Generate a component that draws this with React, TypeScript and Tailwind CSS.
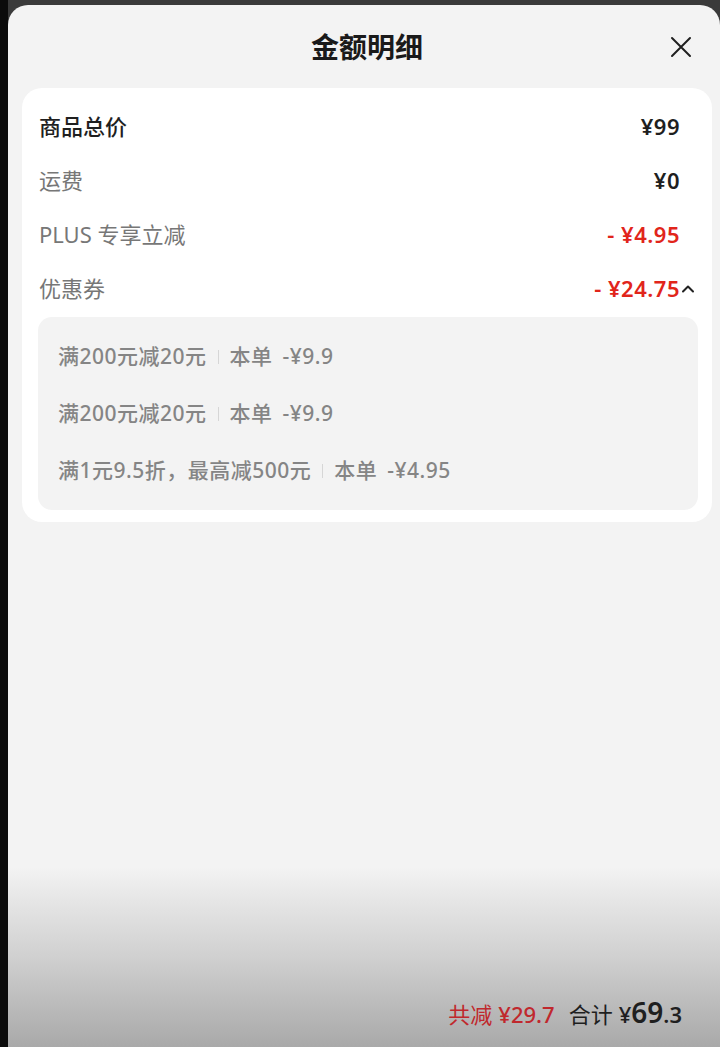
const coupons = [
  { rule: "满200元减20元", off: "-¥9.9" },
  { rule: "满200元减20元", off: "-¥9.9" },
  { rule: "满1元9.5折，最高减500元", off: "-¥4.95" },
];

const Row = ({ label, value, dark, red, open }: { label: string; value: string; dark?: boolean; red?: boolean; open?: boolean }) => (
  <div className="h-[54px] flex items-center justify-between pr-[32px] pb-[3px]">
    <span className={dark ? "text-[22px] text-[#1f1f1f] font-medium" : "text-[22px] text-[#777777]"}>{label}</span>
    <span className={`relative text-[22px] font-semibold tracking-[0.5px] ${red ? "text-[#e1251b]" : "text-[#1f1f1f]"}`}>
      {value}
      {open && (
        <svg className="absolute left-full top-1/2 -translate-y-1/2 ml-[1px]" width="14" height="10" viewBox="0 0 14 10" fill="none">
          <polyline points="2,7.5 7,2.5 12,7.5" stroke="#222" strokeWidth="2" strokeLinecap="round" strokeLinejoin="round" />
        </svg>
      )}
    </span>
  </div>
);

export default function App() {
  return (
    <div
      className="h-[1047px] w-[720px] flex bg-[#0b0b0b] overflow-hidden"
      style={{ fontFamily: '"Noto Sans", "Noto Sans CJK SC", sans-serif' }}
    >
      <div className="w-[8px] shrink-0" />
      <div className="flex-1 flex flex-col bg-[#3a3a3a]">
        <div className="h-[5px] shrink-0" />
        <div className="flex-1 flex flex-col bg-[#f3f3f3] rounded-t-[20px]">
          {/* header */}
          <div className="h-[83px] shrink-0 relative flex items-center justify-center">
            <h1 className="text-[28px] font-bold text-[#1a1a1a] ml-[6px]">金额明细</h1>
            <button className="absolute right-[28px] top-1/2 -translate-y-1/2">
              <svg width="22" height="22" viewBox="0 0 22 22" fill="none">
                <path d="M2 2L20 20M20 2L2 20" stroke="#1f1f1f" strokeWidth="2" strokeLinecap="round" />
              </svg>
            </button>
          </div>

          {/* card */}
          <div className="ml-[14px] mr-[8px] bg-white rounded-[20px] pt-[13px] pb-[12px] pl-[17px]">
            <Row label="商品总价" value="¥99" dark />
            <Row label="运费" value="¥0" />
            <Row label="PLUS 专享立减" value="- ¥4.95" red />
            <Row label="优惠券" value="- ¥24.75" red open />

            <div className="-ml-[1px] mr-[14px] bg-[#f3f3f3] rounded-[14px] pt-[11px] pb-[11px] pl-[20px]">
              {coupons.map((c, i) => (
                <div key={i} className="h-[57px] flex items-center text-[21px] tracking-[0.5px] text-[#858585] font-medium">
                  <span>{c.rule}</span>
                  <span className="w-px h-[14px] bg-[#d6d6d6] mx-[11px]" />
                  <span>本单</span>
                  <span className="ml-[10px]">{c.off}</span>
                </div>
              ))}
            </div>
          </div>

          <div className="flex-1" />

          {/* footer */}
          <div className="h-[180px] shrink-0 bg-linear-to-b from-[#f3f3f3] via-[#d0d0d0] to-[#a9a9a9] flex items-end justify-end pr-[38px] pb-[14px]">
            <div className="flex items-baseline">
              <span className="text-[22px] text-[#c0282d]">共减</span>
              <span className="text-[22px] text-[#c0282d] font-medium ml-[6px]">¥29.7</span>
              <span className="text-[22px] text-[#1f1f1f] ml-[14px]">合计</span>
              <span className="text-[22px] text-[#1f1f1f] font-medium ml-[6px]">¥</span>
              <span className="text-[28px] text-[#1f1f1f] font-semibold">69</span>
              <span className="text-[22px] text-[#1f1f1f] font-semibold">.3</span>
            </div>
          </div>
        </div>
      </div>
    </div>
  );
}
